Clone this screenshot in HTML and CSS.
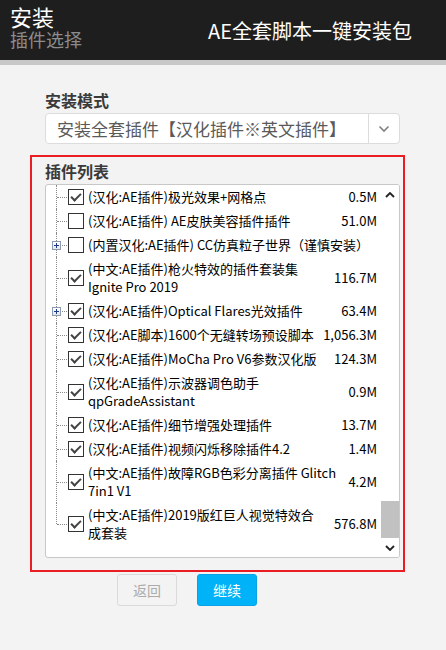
FILE: index.html
```html
<!DOCTYPE html>
<html lang="zh-CN">
<head>
<meta charset="utf-8">
<title>AE全套脚本一键安装包</title>
<link rel="stylesheet" href="styles.css">
</head>
<body>
<header class="top">
  <div class="titles">
    <div class="t1">安装</div>
    <div class="t2">插件选择</div>
  </div>
  <div class="brand">AE全套脚本一键安装包</div>
</header>
<div class="strip"></div>
<main class="content">
  <h2 class="label">安装模式</h2>
  <div class="select">
    <span class="sel-text">安装全套插件【汉化插件※英文插件】</span>
    <span class="sel-btn"><svg width="12" height="8" viewBox="0 0 12 8"><path d="M1.5 1.5 L6 6 L10.5 1.5" fill="none" stroke="#808080" stroke-width="1.6"/></svg></span>
  </div>
  <section class="frame">
    <h2 class="label">插件列表</h2>
    <div class="listbox">
      <div class="tree">
        <div class="row"><span class="cb on"></span><span class="name">(汉化:AE插件)极光效果+网格点</span><span class="size">0.5M</span></div>
        <div class="row"><span class="cb"></span><span class="name">(汉化:AE插件) AE皮肤美容插件插件</span><span class="size">51.0M</span></div>
        <div class="row"><span class="plus"></span><span class="cb"></span><span class="name">(内置汉化:AE插件) CC仿真粒子世界（谨慎安装）</span><span class="size"></span></div>
        <div class="row"><span class="cb on"></span><span class="name">(中文:AE插件)枪火特效的插件套装集<br>Ignite Pro 2019</span><span class="size">116.7M</span></div>
        <div class="row"><span class="plus"></span><span class="cb on"></span><span class="name">(汉化:AE插件)Optical Flares光效插件</span><span class="size">63.4M</span></div>
        <div class="row"><span class="cb on"></span><span class="name">(汉化:AE脚本)1600个无缝转场预设脚本</span><span class="size">1,056.3M</span></div>
        <div class="row"><span class="cb on"></span><span class="name">(汉化:AE插件)MoCha Pro V6参数汉化版</span><span class="size">124.3M</span></div>
        <div class="row"><span class="cb on"></span><span class="name">(汉化:AE插件)示波器调色助手<br>qpGradeAssistant</span><span class="size">0.9M</span></div>
        <div class="row"><span class="cb on"></span><span class="name">(汉化:AE插件)细节增强处理插件</span><span class="size">13.7M</span></div>
        <div class="row"><span class="cb on"></span><span class="name">(汉化:AE插件)视频闪烁移除插件4.2</span><span class="size">1.4M</span></div>
        <div class="row"><span class="cb on"></span><span class="name">(中文:AE插件)故障RGB色彩分离插件 Glitch<br>7in1 V1</span><span class="size">4.2M</span></div>
        <div class="row last"><span class="cb on"></span><span class="name">(中文:AE插件)2019版红巨人视觉特效合<br>成套装</span><span class="size">576.8M</span></div>
      </div>
      <div class="scrollbar">
        <span class="sb-btn"><svg width="10" height="6" viewBox="0 0 10 6"><path d="M1 5 L5 1 L9 5" fill="none" stroke="#222" stroke-width="1.8"/></svg></span>
        <span class="sb-track"></span>
        <span class="sb-thumb"></span>
        <span class="sb-btn"><svg width="10" height="6" viewBox="0 0 10 6"><path d="M1 1 L5 5 L9 1" fill="none" stroke="#222" stroke-width="1.8"/></svg></span>
      </div>
    </div>
  </section>
  <div class="buttons">
    <button class="btn back">返回</button>
    <button class="btn next">继续</button>
  </div>
</main>
</body>
</html>
```
FILE: styles.css
```css
* { box-sizing: border-box; }
html, body { margin: 0; padding: 0; }
body {
  background: #f3f3f3;
  font-family: "Noto Sans CJK SC", "Noto Sans", sans-serif;
  width: 446px;
  height: 650px;
  overflow: hidden;
}
.top {
  height: 60px;
  background: #1e1e1e;
  display: flex;
  justify-content: space-between;
  align-items: flex-start;
  padding: 0 34px 0 10px;
}
.titles { padding-top: 3px; }
.t1 { color: #fff; font-size: 22px; line-height: 26px; }
.t2 { color: #8c8c8c; font-size: 18px; line-height: 20px; }
.brand { color: #fff; font-size: 20px; line-height: 24px; padding-top: 19px; }
.strip { height: 5px; background: #c8c8c8; }
.content { padding: 25px 46px 0 45px; }
.label {
  margin: 0;
  font-size: 16px;
  line-height: 20px;
  font-weight: bold;
  color: #3a3a3a;
}
.select {
  margin-top: 3px;
  height: 31px;
  background: #fff;
  border: 1px solid #dcdcdc;
  border-radius: 4px;
  display: flex;
  align-items: stretch;
}
.sel-text {
  flex: 1;
  padding-left: 11px;
  font-size: 17px;
  line-height: 29px;
  color: #5a5a5a;
  white-space: nowrap;
  overflow: hidden;
}
.sel-btn {
  width: 31px;
  border-left: 1px solid #dcdcdc;
  display: flex;
  align-items: center;
  justify-content: center;
}
.frame {
  margin: 11px 0 0 -15px;
  width: 375px;
  border: 2px solid #ea1c24;
  padding: 4px 3px 12px 13px;
}
.listbox {
  margin-top: 3px;
  height: 374px;
  background: #fff;
  border: 1px solid #c8c8c8;
  border-radius: 3px;
  display: flex;
  overflow: hidden;
}
.tree {
  flex: 1;
  padding: 0 4px 0 0;
  font-size: 13px;
  line-height: 18px;
  color: #000;
}
.row {
  position: relative;
  display: flex;
  align-items: center;
  padding: 3px 0 3px 22px;
  min-height: 24px;
}
.row::before {
  content: "";
  position: absolute;
  left: 10px;
  top: 0;
  bottom: 0;
  border-left: 1px dotted #8a8a8a;
}
.row.last::before { bottom: 50%; }
.row::after {
  content: "";
  position: absolute;
  left: 11px;
  top: 50%;
  width: 10px;
  border-top: 1px dotted #8a8a8a;
}
.plus {
  position: absolute;
  left: 6px;
  top: calc(50% - 4px);
  width: 9px;
  height: 9px;
  border: 1px solid #8c9bb0;
  background: linear-gradient(#fff, #e6e6e6);
  z-index: 1;
}
.plus::before, .plus::after {
  content: "";
  position: absolute;
  background: #1c3a8c;
}
.plus::before { left: 1px; top: 3px; width: 5px; height: 1px; }
.plus::after { left: 3px; top: 1px; width: 1px; height: 5px; }
.cb {
  flex: none;
  width: 16px;
  height: 16px;
  border: 1px solid #333;
  background: #fff;
  margin-right: 4px;
  position: relative;
}
.cb.on::after {
  content: "";
  position: absolute;
  left: 4px;
  top: 1px;
  width: 4px;
  height: 8px;
  border-right: 2px solid #444;
  border-bottom: 2px solid #444;
  transform: rotate(45deg);
  transform-origin: center;
}
.name { flex: 1; }
.size { margin-left: 8px; white-space: nowrap; text-align: right; }
.scrollbar {
  width: 18px;
  display: flex;
  flex-direction: column;
  background: #fff;
}
.sb-btn {
  height: 19px;
  display: flex;
  align-items: center;
  justify-content: center;
}
.sb-track { flex: 1; }
.sb-thumb { height: 37px; background: #c1c1c1; }
.buttons {
  margin-top: 2px;
  padding-left: 72px;
  display: flex;
  gap: 20px;
}
.btn {
  width: 60px;
  height: 32px;
  font-family: inherit;
  font-size: 14px;
  border-radius: 3px;
  padding: 0;
}
.back { background: #f3f3f3; border: 1px solid #dadada; color: #ababab; }
.next { background: #00b2f7; border: 1px solid #0aa2e6; color: #fff; }
```
